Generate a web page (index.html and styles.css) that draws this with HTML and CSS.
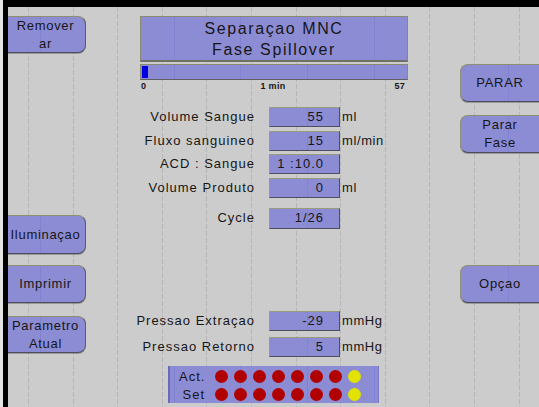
FILE: index.html
```html
<!DOCTYPE html>
<html lang="pt">
<head>
    <meta charset="UTF-8">
    <meta name="viewport" content="width=device-width, initial-scale=1.0">
    <title>Separaçao MNC</title>
    <link rel="stylesheet" href="styles.css">
</head>
<body>
    <div class="screen">
        <!-- Left buttons -->
        <div class="col col-left">
            <div class="btn btn-left btn-remover">Remover<br>ar</div>
            <div class="btn btn-left btn-luz">Iluminaçao</div>
            <div class="btn btn-left btn-imprimir">Imprimir</div>
            <div class="btn btn-left btn-param">Parametro<br>Atual</div>
        </div>

        <!-- Center panel -->
        <div class="col col-center">
            <div class="title-box">Separaçao MNC<br>Fase Spillover</div>
            <div class="progress"><div class="progress-fill"></div></div>
            <div class="scale">
                <span>0</span>
                <span>1 min</span>
                <span class="scale-end">57</span>
            </div>

            <div class="rows rows-main">
                <span class="label">Volume Sangue</span>
                <span class="field">55</span>
                <span class="unit">ml</span>

                <span class="label">Fluxo sanguineo</span>
                <span class="field">15</span>
                <span class="unit">ml/min</span>

                <span class="label">ACD : Sangue</span>
                <span class="field">1 :10.0</span>
                <span class="unit"></span>

                <span class="label">Volume Produto</span>
                <span class="field">0</span>
                <span class="unit">ml</span>
            </div>

            <div class="rows rows-cycle">
                <span class="label">Cycle</span>
                <span class="field field-tall">1/26</span>
                <span class="unit"></span>
            </div>

            <div class="rows rows-press">
                <span class="label">Pressao Extraçao</span>
                <span class="field">-29</span>
                <span class="unit">mmHg</span>

                <span class="label">Pressao Retorno</span>
                <span class="field">5</span>
                <span class="unit">mmHg</span>
            </div>

            <div class="status">
                <span class="status-label">Act.</span>
                <div class="dots">
                    <i class="dot"></i><i class="dot"></i><i class="dot"></i><i class="dot"></i>
                    <i class="dot"></i><i class="dot"></i><i class="dot"></i><i class="dot dot-on"></i>
                </div>
                <span class="status-label">Set</span>
                <div class="dots">
                    <i class="dot"></i><i class="dot"></i><i class="dot"></i><i class="dot"></i>
                    <i class="dot"></i><i class="dot"></i><i class="dot"></i><i class="dot dot-on"></i>
                </div>
            </div>
        </div>

        <!-- Right buttons -->
        <div class="col col-right">
            <div class="btn btn-right btn-parar">PARAR</div>
            <div class="btn btn-right btn-fase">Parar<br>Fase</div>
            <div class="btn btn-right btn-opcao">Opçao</div>
        </div>
    </div>
</body>
</html>
```

FILE: styles.css
```css
/* General styling */
body, html {
    margin: 0;
    padding: 0;
    background: #e4e4e4;
    font-family: "Liberation Sans", Arial, sans-serif;
    font-size: 13px;
    letter-spacing: 1px;
    color: #161616;
}

.screen {
    position: relative;
    display: flex;
    box-sizing: border-box;
    width: 536px;
    height: 407px;
    margin-left: 3px;
    border-top: 7px solid #000;
    border-left: 5px solid #000;
    background: #cccccc;
}

/* dashed grid lines */
.screen::before {
    content: "";
    position: absolute;
    top: 0;
    left: 0;
    right: 0;
    bottom: 0;
    background: repeating-linear-gradient(90deg, transparent 0, transparent 20px, #b6b6b6 20px, #b6b6b6 21px, transparent 21px, transparent 44.6px);
    -webkit-mask-image: repeating-linear-gradient(180deg, #000 0, #000 5px, transparent 5px, transparent 7px);
    mask-image: repeating-linear-gradient(180deg, #000 0, #000 5px, transparent 5px, transparent 7px);
}

.col {
    position: relative;
    display: flex;
    flex-direction: column;
}

.col-left {
    width: 78px;
}

.col-center {
    flex: 1;
}

.col-right {
    width: 79px;
}

/* shared periwinkle surface */
.btn, .title-box, .progress, .field, .status {
    background-color: #8c8cd5;
    background-image: repeating-linear-gradient(90deg, transparent 0, transparent 40px, #8282d2 40px, #8282d2 41px, transparent 41px, transparent 66.8px);
    background-attachment: fixed;
}

/* Buttons */
.btn {
    box-sizing: border-box;
    display: flex;
    align-items: center;
    justify-content: center;
    text-align: center;
    line-height: 18px;
    letter-spacing: 0.7px;
    border: 1px solid #8e8e70;
    border-bottom-color: #4c4c5c;
    box-shadow: 0 1px 0 rgba(0, 0, 0, 0.25);
}

.btn-left {
    border-left: none;
    border-right-color: #5a5a68;
    border-radius: 0 8px 8px 0;
    padding-right: 2px;
}

.btn-right {
    border-right: none;
    border-radius: 8px 0 0 8px;
}

.btn-remover { margin-top: 9px; height: 37px; }
.btn-luz { margin-top: 162px; height: 39px; }
.btn-imprimir { margin-top: 11px; height: 38px; }
.btn-param { margin-top: 13px; height: 37px; }

.btn-parar { margin-top: 57px; height: 38px; }
.btn-fase { margin-top: 13px; height: 38px; }
.btn-opcao { margin-top: 112px; height: 38px; }

/* Title and progress */
.title-box {
    box-sizing: border-box;
    width: 268px;
    height: 46px;
    margin: 9px 0 0 54px;
    display: flex;
    align-items: center;
    justify-content: center;
    text-align: center;
    font-size: 16px;
    letter-spacing: 1.6px;
    line-height: 21px;
    border: 1px solid #8a8a72;
    border-bottom: 2px solid #707066;
}

.progress {
    box-sizing: border-box;
    width: 268px;
    height: 16px;
    margin: 2px 0 0 54px;
    padding: 1px;
    border: 1px solid #8a8a72;
    border-bottom-color: #606060;
}

.progress-fill {
    width: 6px;
    height: 12px;
    background: #0000e0;
}

.scale {
    display: grid;
    grid-template-columns: 1fr auto 1fr;
    width: 264px;
    height: 12px;
    margin-left: 55px;
    font-size: 9px;
    font-weight: bold;
    letter-spacing: 0.3px;
    line-height: 12px;
}

.scale-end {
    text-align: right;
}

/* Data rows */
.rows {
    display: grid;
    grid-template-columns: 183px 71px auto;
}

.rows-main {
    margin-top: 15px;
    row-gap: 3.5px;
}

.rows-cycle {
    margin-top: 10.5px;
}

.rows-press {
    margin-top: 82px;
    row-gap: 6px;
}

.label {
    text-align: right;
    line-height: 20px;
    margin-right: 14px;
    white-space: nowrap;
}

.field {
    box-sizing: border-box;
    height: 20px;
    padding-right: 15px;
    text-align: right;
    line-height: 18px;
    border: 1px solid #9a9a7c;
    border-right-color: #4e4e5e;
    border-bottom-color: #4e4e5e;
}

.field-tall {
    height: 21px;
}

.unit {
    line-height: 20px;
    padding-left: 2px;
    letter-spacing: 0.6px;
}

/* Act / Set indicator */
.status {
    box-sizing: border-box;
    width: 211px;
    height: 37px;
    margin: 9px 0 0 82px;
    padding: 4px 0 0 9px;
    display: grid;
    grid-template-columns: 26px auto;
    column-gap: 10px;
    row-gap: 3px;
    border-left: 2px solid #6a6ab8;
    border-right: 1px solid #7a7ac4;
}

.status-label {
    line-height: 13px;
    text-align: right;
}

.dots {
    display: flex;
    gap: 6px;
}

.dot {
    width: 13px;
    height: 13px;
    border-radius: 50%;
    background: #b00000;
}

.dot-on {
    background: #e2e200;
}
```
